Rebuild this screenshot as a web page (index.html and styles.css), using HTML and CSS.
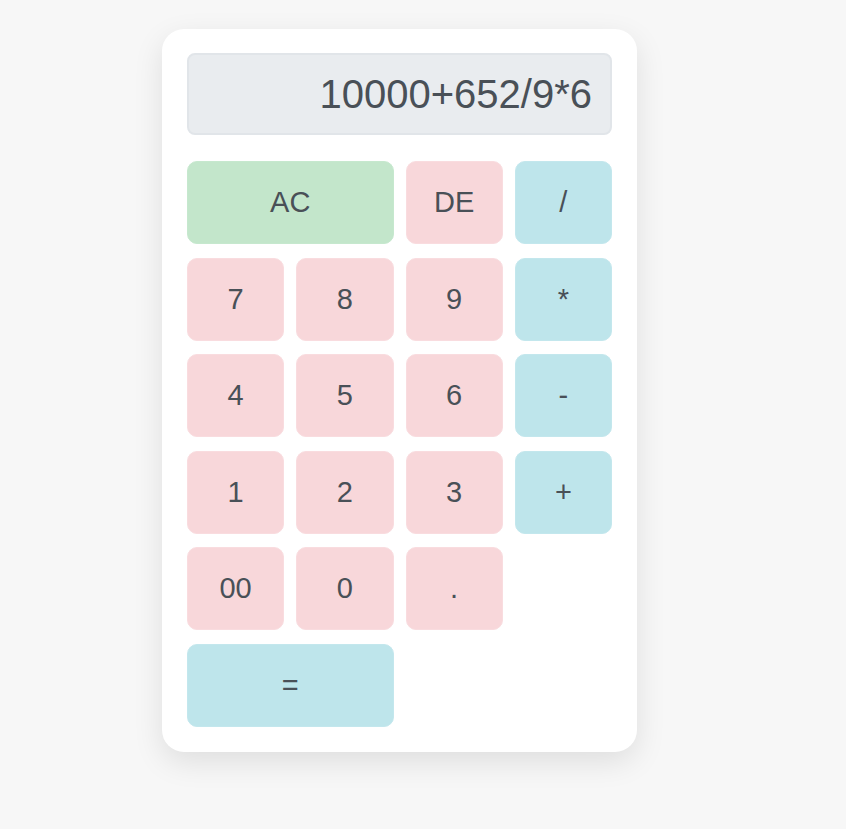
FILE: index.html
```html
<!DOCTYPE html>
<html lang="en">
<head>
<meta charset="utf-8">
<title>Calculator</title>
<link rel="stylesheet" href="styles.css">
</head>
<body>
<div class="calc">
  <div class="display">10000+652/9*6</div>
  <div class="keys">
    <button class="key green wide">AC</button>
    <button class="key pink">DE</button>
    <button class="key blue">/</button>
    <button class="key pink">7</button>
    <button class="key pink">8</button>
    <button class="key pink">9</button>
    <button class="key blue">*</button>
    <button class="key pink">4</button>
    <button class="key pink">5</button>
    <button class="key pink">6</button>
    <button class="key blue">-</button>
    <button class="key pink">1</button>
    <button class="key pink">2</button>
    <button class="key pink">3</button>
    <button class="key blue">+</button>
    <button class="key pink">00</button>
    <button class="key pink">0</button>
    <button class="key pink">.</button>
    <span class="empty"></span>
    <button class="key blue wide">=</button>
  </div>
</div>
</body>
</html>
```

FILE: styles.css
```css
html, body {
  margin: 0;
  padding: 0;
}
body {
  background: #f7f7f7;
  font-family: "Liberation Sans", Arial, sans-serif;
  color: #495057;
  min-height: 829px;
}
.calc {
  box-sizing: border-box;
  width: 475px;
  margin: 29px 0 0 162px;
  padding: 24px 25px 25px;
  background: #ffffff;
  border-radius: 22px;
  box-shadow: 0 10px 30px rgba(0, 0, 0, 0.1);
}
.display {
  box-sizing: border-box;
  height: 82px;
  background: #e9ecef;
  border: 2px solid #e1e5e9;
  border-radius: 8px;
  font-size: 40px;
  line-height: 78px;
  text-align: right;
  padding-right: 18px;
  color: #495057;
}
.keys {
  margin-top: 26px;
  display: grid;
  grid-template-columns: repeat(4, 1fr);
  grid-auto-rows: 83px;
  column-gap: 12px;
  row-gap: 13.6px;
}
.key {
  box-sizing: border-box;
  border: 1px solid transparent;
  border-radius: 10px;
  font-family: "Liberation Sans", Arial, sans-serif;
  font-size: 29px;
  color: #495057;
  padding: 0;
  cursor: pointer;
}
.wide {
  grid-column: span 2;
}
.green {
  background: #c3e6cb;
  border-color: #c6e8ce;
}
.pink {
  background: #f8d7da;
  border-color: #f9dcdf;
}
.blue {
  background: #bee5eb;
  border-color: #c3e7ed;
}
```
